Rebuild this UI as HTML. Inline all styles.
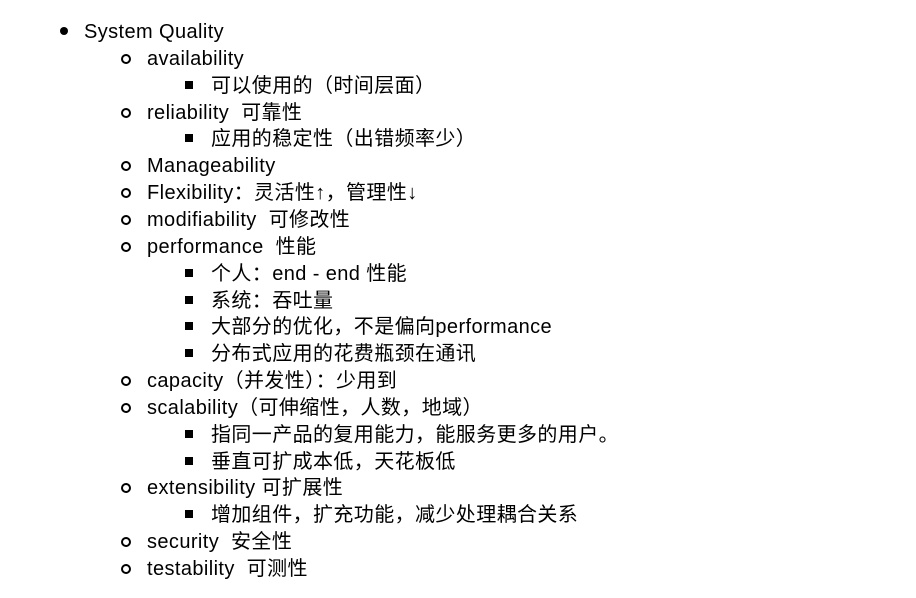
<!DOCTYPE html>
<html><head><meta charset="utf-8"><style>
body{margin:0;width:916px;height:598px;background:#fff;font-family:"Liberation Sans","Noto Sans CJK SC",sans-serif;font-size:20px;color:#000;position:relative;overflow:hidden}
.l{position:absolute;height:27px;line-height:27px;white-space:nowrap;letter-spacing:0.4px}
.l0{left:84px}.l1{left:147px}.l2{left:211px}
.b{position:absolute}
.d{width:8px;height:8px;border-radius:50%;background:#000;left:60px}
.c{width:6px;height:6px;border-radius:50%;border:2px solid #000;left:121px}
.s{width:8px;height:8px;background:#000;left:185px}
</style></head><body>
<div id="w"></div>
<script>
var items=[
[0,"System Quality"],[1,"availability"],[2,"可以使用的（时间层面）"],[1,"reliability&nbsp; 可靠性"],[2,"应用的稳定性（出错频率少）"],[1,"Manageability"],[1,"Flexibility：灵活性↑，管理性↓"],[1,"modifiability&nbsp; 可修改性"],[1,"performance&nbsp; 性能"],[2,"个人：end - end 性能"],[2,"系统：吞吐量"],[2,"大部分的优化，不是偏向performance"],[2,"分布式应用的花费瓶颈在通讯"],[1,"capacity（并发性）：少用到"],[1,"scalability（可伸缩性，人数，地域）"],[2,"指同一产品的复用能力，能服务更多的用户。"],[2,"垂直可扩成本低，天花板低"],[1,"extensibility 可扩展性"],[2,"增加组件，扩充功能，减少处理耦合关系"],[1,"security&nbsp; 安全性"],[1,"testability&nbsp; 可测性"]];
var h="";
items.forEach(function(it,i){var cy=31+i*26.85;
h+='<div class="l l'+it[0]+'" style="top:'+(cy-12)+'px">'+it[1]+'</div>';
var cls=["d","c","s"][it[0]];
h+='<div class="b '+cls+'" style="top:'+(cy-4)+'px"></div>';});
document.getElementById("w").innerHTML=h;
</script>
</body></html>
